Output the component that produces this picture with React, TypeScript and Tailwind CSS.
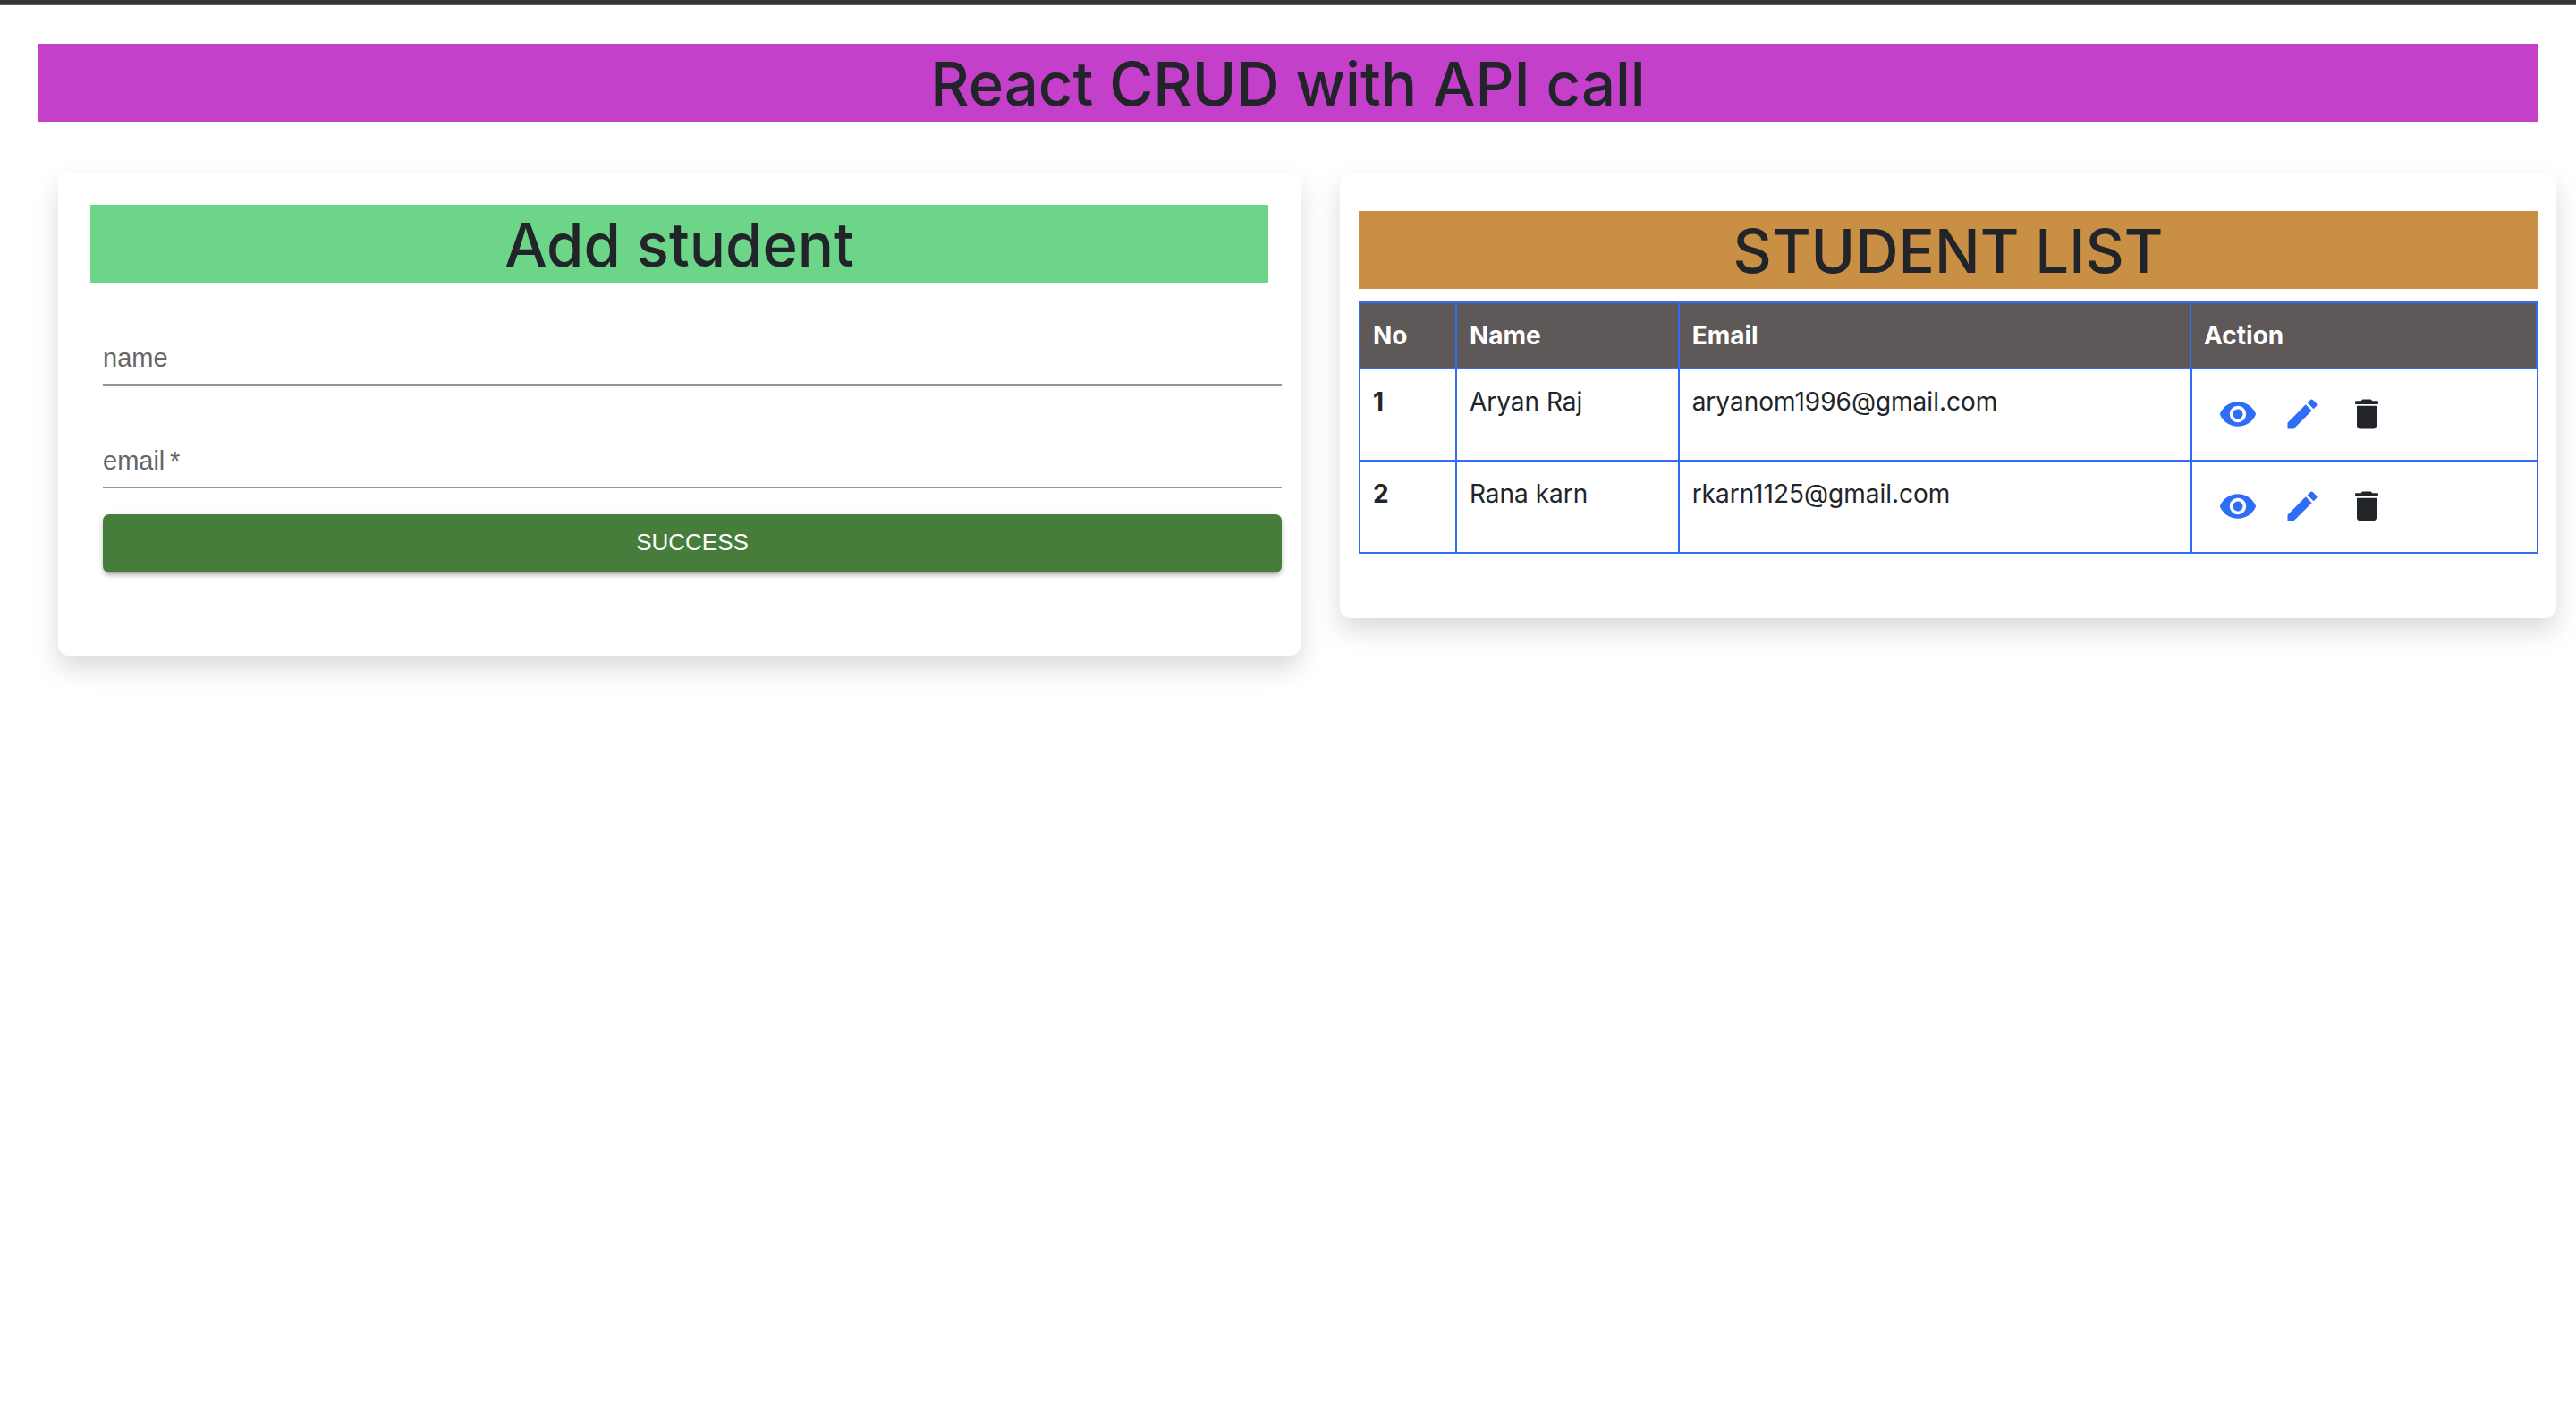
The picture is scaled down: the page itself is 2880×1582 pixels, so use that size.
import React from "react";
import { MdDelete, MdEdit, MdVisibility } from "react-icons/md";

type Student = { id: number; name: string; email: string };

const students: Student[] = [
  { id: 1, name: "Aryan Raj", email: "aryanom1996@gmail.com" },
  { id: 2, name: "Rana karn", email: "rkarn1125@gmail.com" },
];

const card = "rounded-[12px] bg-white shadow-[0_14px_29px_rgba(0,0,0,0.15)]";
const heading = "pt-[2px] text-center text-[67px] leading-[85px] font-medium";

function Field({ id, label, required }: { id: string; label: string; required?: boolean }) {
  return (
    <div className="grid h-[86px] border-b-2 border-[#949494] font-['Liberation_Sans',sans-serif]">
      <label
        htmlFor={id}
        className="pointer-events-none col-start-1 row-start-1 self-end pb-[11px] text-[29px] leading-[36px] text-[#666666]"
      >
        {label}
        {required && <span aria-hidden="true">{"\u2009*"}</span>}
      </label>
      <input
        id={id}
        name={id}
        type="text"
        required={required}
        className="col-start-1 row-start-1 w-full self-end bg-transparent pb-[11px] text-[29px] leading-[36px] outline-none"
      />
    </div>
  );
}

function IconButton({ label, className, children }: { label: string; className?: string; children: React.ReactNode }) {
  return (
    <button type="button" aria-label={label} className={`rounded-full p-[14px] ${className ?? ""}`}>
      {children}
    </button>
  );
}

function AddStudent() {
  return (
    <section className={`${card} pt-[36px] pb-[93px]`}>
      <h2 className={`${heading} mx-[36px] bg-[#6cd587]`}>Add student</h2>
      <form className="mt-[29px] mr-[21px] ml-[50px] flex flex-col gap-[29px]">
        <Field id="name" label="name" />
        <Field id="email" label="email" required />
        <button
          type="button"
          className="h-[65px] rounded-[7px] bg-[#467d3b] pb-[2px] font-['Liberation_Sans',sans-serif] text-[26px] text-white shadow-[0_5px_2px_-4px_rgba(0,0,0,0.2),0_4px_4px_rgba(0,0,0,0.14),0_2px_9px_rgba(0,0,0,0.12)]"
        >
          SUCCESS
        </button>
      </form>
    </section>
  );
}

function StudentList() {
  return (
    <section className={`${card} px-[21px] pt-[43px] pb-[72px]`}>
      <h2 className={`${heading} bg-[#c98f45]`}>STUDENT LIST</h2>
      <table className="mt-[14px] w-full table-fixed border-collapse text-left text-[28px] leading-[43px]">
        <colgroup>
          <col className="w-[8.2%]" />
          <col className="w-[18.9%]" />
          <col className="w-[43.5%]" />
          <col className="w-[29.4%]" />
        </colgroup>
        <thead className="bg-[#5e5858] text-white">
          <tr>
            {["No", "Name", "Email", "Action"].map((title) => (
              <th key={title} scope="col" className="border-2 border-[#2f6df6] px-[14px] pt-[15px] pb-[14px] font-bold">
                {title}
              </th>
            ))}
          </tr>
        </thead>
        <tbody>
          {students.map((s) => (
            <tr key={s.id} className="align-top">
              <th scope="row" className="border-2 border-[#2f6df6] px-[14px] pt-[15px] font-bold">
                {s.id}
              </th>
              <td className="border-2 border-[#2f6df6] px-[14px] pt-[15px]">{s.name}</td>
              <td className="border-2 border-[#2f6df6] px-[14px] pt-[15px]">{s.email}</td>
              <td className="border-2 border-r border-l-3 border-[#2f6df6] px-[15px] pt-[14px] pb-[15px]">
                <div className="flex">
                  <IconButton label={`View ${s.name}`} className="text-[#2f6df6]">
                    <MdVisibility size={44} />
                  </IconButton>
                  <IconButton label={`Edit ${s.name}`} className="text-[#2f6df6]">
                    <MdEdit size={44} />
                  </IconButton>
                  <IconButton label={`Delete ${s.name}`}>
                    <MdDelete size={44} />
                  </IconButton>
                </div>
              </td>
            </tr>
          ))}
        </tbody>
      </table>
    </section>
  );
}

export default function App() {
  return (
    <div className="min-h-screen overflow-hidden border-t-4 border-[#35363a] bg-white font-['Inter',sans-serif] text-[#212529]">
      <div className="h-[2px] bg-[#5f6064]" />
      <h1 className={`${heading} mx-[43px] mt-[43px] bg-[#c440cb]`}>React CRUD with API call</h1>
      <main className="mt-[57px] grid grid-cols-[1389fr_1360fr] items-start gap-[44px] pr-[22px] pl-[65px]">
        <AddStudent />
        <StudentList />
      </main>
    </div>
  );
}
